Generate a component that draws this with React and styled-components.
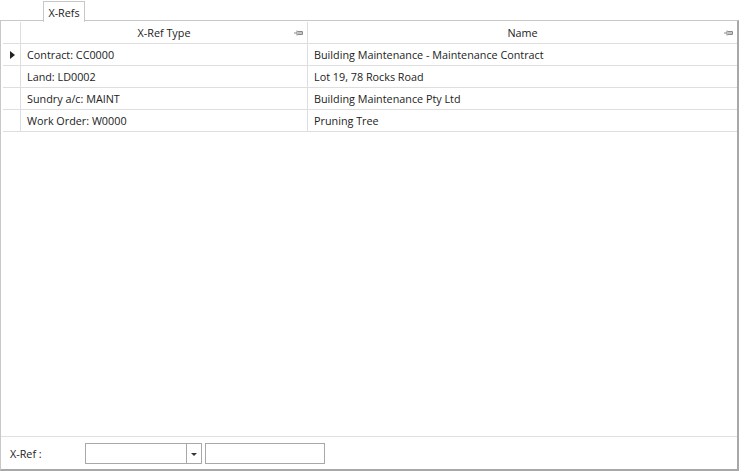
import React from "react";
import styled, { createGlobalStyle } from "styled-components";

const GlobalStyle = createGlobalStyle`
  html, body {
    margin: 0;
    padding: 0;
    background: #ffffff;
  }
  body {
    font-family: "Segoe UI", "Open Sans", "Noto Sans", sans-serif;
    font-size: 10.8px;
    color: #222;
  }
`;

const Page = styled.div`
  width: 739px;
  height: 471px;
  display: flex;
  flex-direction: column;
  box-sizing: border-box;
`;

const TabStrip = styled.div`
  display: flex;
  height: 20px;
  padding-left: 43px;
`;

const Tab = styled.div`
  width: 42px;
  height: 21px;
  box-sizing: border-box;
  border: 1px solid #c8c8c8;
  border-bottom: none;
  background: #fff;
  display: flex;
  align-items: center;
  justify-content: center;
  position: relative;
  z-index: 1;
  margin-top: 1px;
`;

const Panel = styled.div`
  flex: 1;
  display: flex;
  flex-direction: column;
  border: 1px solid #c8c8c8;
  border-right: 2px solid #a8a8a8;
  border-bottom: 2px solid #a8a8a8;
  box-sizing: border-box;
`;

const Grid = styled.div`
  flex: 1;
  display: flex;
  flex-direction: column;
  border-bottom: 1px solid #e0e0e0;
  padding: 1px 0 0 2px;
`;

const Row = styled.div`
  display: grid;
  grid-template-columns: 18px 287px 1fr;
  height: 22px;
  border-bottom: 1px solid #dedede;
  box-sizing: border-box;
`;

const Cell = styled.div`
  display: flex;
  align-items: center;
  padding-left: ${(p) => (p.$header ? "0" : "6px")};
  justify-content: ${(p) => (p.$header ? "center" : "flex-start")};
  border-right: 1px solid #dedede;
  position: relative;
  white-space: nowrap;
  &:last-child {
    border-right: none;
  }
`;

const Indicator = styled.div`
  display: flex;
  align-items: center;
  justify-content: center;
  border-right: 1px solid #dedede;
`;

const Arrow = styled.div`
  width: 0;
  height: 0;
  border-left: 5px solid #222;
  border-top: 4px solid transparent;
  border-bottom: 4px solid transparent;
  margin-left: 1px;
`;

const PinIcon = styled.svg`
  position: absolute;
  right: 3px;
  top: 7px;
`;

const Footer = styled.div`
  height: 32px;
  display: flex;
  align-items: center;
  padding-left: 9px;
`;

const Label = styled.div`
  width: 75px;
`;

const Combo = styled.div`
  width: 117px;
  height: 21px;
  box-sizing: border-box;
  border: 1px solid #a8a8a8;
  display: flex;
  margin-right: 3px;
`;

const ComboInput = styled.div`
  flex: 1;
  border-right: 1px solid #a8a8a8;
`;

const ComboButton = styled.div`
  width: 14px;
  display: flex;
  align-items: center;
  justify-content: center;
`;

const DownArrow = styled.div`
  width: 0;
  height: 0;
  border-top: 3px solid #333;
  border-left: 3px solid transparent;
  border-right: 3px solid transparent;
  margin-top: 2px;
`;

const TextBox = styled.div`
  width: 120px;
  height: 21px;
  box-sizing: border-box;
  border: 1px solid #a8a8a8;
`;

const Pin = () => (
  <PinIcon width="10" height="8" viewBox="0 0 10 8">
    <path d="M0 4 H3 M3 1.5 V6.5 M3.5 2.5 H8.5 V5.5 H3.5 M4 4 H8.5" stroke="#8a8a8a" strokeWidth="1" fill="none" />
  </PinIcon>
);

const rows = [
  ["Contract: CC0000", "Building Maintenance - Maintenance Contract"],
  ["Land: LD0002", "Lot 19, 78 Rocks Road"],
  ["Sundry a/c: MAINT", "Building Maintenance Pty Ltd"],
  ["Work Order: W0000", "Pruning Tree"],
];

export default function App() {
  return (
    <>
      <GlobalStyle />
      <Page>
        <TabStrip>
          <Tab>X-Refs</Tab>
        </TabStrip>
        <Panel>
          <Grid>
            <Row>
              <Indicator />
              <Cell $header>
                X-Ref Type
                <Pin />
              </Cell>
              <Cell $header>
                Name
                <Pin />
              </Cell>
            </Row>
            {rows.map((r, i) => (
              <Row key={i}>
                <Indicator>{i === 0 && <Arrow />}</Indicator>
                <Cell>{r[0]}</Cell>
                <Cell>{r[1]}</Cell>
              </Row>
            ))}
          </Grid>
          <Footer>
            <Label>X-Ref :</Label>
            <Combo>
              <ComboInput />
              <ComboButton>
                <DownArrow />
              </ComboButton>
            </Combo>
            <TextBox />
          </Footer>
        </Panel>
      </Page>
    </>
  );
}
